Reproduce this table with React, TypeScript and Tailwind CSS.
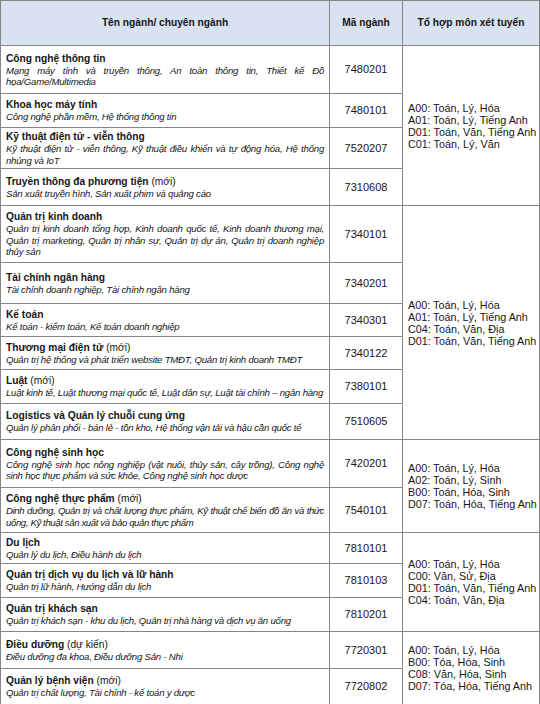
type Row = {
  title: string;
  note?: string;
  lines: string[];
  code: string;
  h: number;
  tight?: boolean;
};

type Group = { combos: string[]; rows: Row[] };

const groups: Group[] = [
  {
    combos: [
      "A00: Toán, Lý, Hóa",
      "A01: Toán, Lý, Tiếng Anh",
      "D01: Toán, Văn, Tiếng Anh",
      "C01: Toán, Lý, Văn",
    ],
    rows: [
      {
        title: "Công nghệ thông tin",
        lines: [
          "Mạng máy tính và truyền thông, An toàn thông tin, Thiết kế Đồ",
          "họa/Game/Multimedia",
        ],
        code: "7480201",
        h: 48,
      },
      {
        title: "Khoa học máy tính",
        lines: ["Công nghệ phần mềm, Hệ thống thông tin"],
        code: "7480101",
        h: 34,
      },
      {
        title: "Kỹ thuật điện tử - viễn thông",
        lines: [
          "Kỹ thuật điện tử - viễn thông, Kỹ thuật điều khiển và tự động hóa, Hệ thống",
          "nhúng và IoT",
        ],
        code: "7520207",
        h: 41,
      },
      {
        title: "Truyền thông đa phương tiện",
        note: "(mới)",
        lines: ["Sản xuất truyền hình, Sản xuất phim và quảng cáo"],
        code: "7310608",
        h: 37,
      },
    ],
  },
  {
    combos: [
      "A00: Toán, Lý, Hóa",
      "A01: Toán, Lý, Tiếng Anh",
      "C04: Toán, Văn, Địa",
      "D01: Toán, Văn, Tiếng Anh",
    ],
    rows: [
      {
        title: "Quản trị kinh doanh",
        lines: [
          "Quản trị kinh doanh tổng hợp, Kinh doanh quốc tế, Kinh doanh thương mại,",
          "Quản trị marketing, Quản trị nhân sự, Quản trị dự án, Quản trị doanh nghiệp",
          "thủy sản",
        ],
        code: "7340101",
        h: 57,
      },
      {
        title: "Tài chính ngân hàng",
        lines: ["Tài chính doanh nghiệp, Tài chính ngân hàng"],
        code: "7340201",
        h: 41,
      },
      {
        title: "Kế toán",
        lines: ["Kế toán - kiểm toán, Kế toán doanh nghiệp"],
        code: "7340301",
        h: 33,
      },
      {
        title: "Thương mại điện tử",
        note: "(mới)",
        lines: ["Quản trị hệ thống và phát triển website TMĐT, Quản trị kinh doanh TMĐT"],
        code: "7340122",
        h: 33,
      },
      {
        title: "Luật",
        note: "(mới)",
        lines: ["Luật kinh tế, Luật thương mại quốc tế, Luật dân sự, Luật tài chính – ngân hàng"],
        code: "7380101",
        h: 34,
      },
      {
        title: "Logistics và Quản lý chuỗi cung ứng",
        lines: ["Quản lý phân phối - bán lẻ - tồn kho, Hệ thống vận tải và hậu cần quốc tế"],
        code: "7510605",
        h: 36,
      },
    ],
  },
  {
    combos: [
      "A00: Toán, Lý, Hóa",
      "A02: Toán, Lý, Sinh",
      "B00: Toán, Hóa, Sinh",
      "D07: Toán, Hóa, Tiếng Anh",
    ],
    rows: [
      {
        title: "Công nghệ sinh học",
        lines: [
          "Công nghệ sinh học nông nghiệp (vật nuôi, thủy sản, cây trồng), Công nghệ",
          "sinh học thực phẩm và sức khỏe, Công nghệ sinh học dược",
        ],
        code: "7420201",
        h: 48,
      },
      {
        title: "Công nghệ thực phẩm",
        note: "(mới)",
        lines: [
          "Dinh dưỡng, Quản trị và chất lượng thực phẩm, Kỹ thuật chế biến đồ ăn và thức",
          "uống, Kỹ thuật sản xuất và bảo quản thực phẩm",
        ],
        code: "7540101",
        h: 45,
        tight: true,
      },
    ],
  },
  {
    combos: [
      "A00: Toán, Lý, Hóa",
      "C00: Văn, Sử, Địa",
      "D01: Toán, Văn, Tiếng Anh",
      "C04: Toán, Văn, Địa",
    ],
    rows: [
      {
        title: "Du lịch",
        lines: ["Quản lý du lịch, Điều hành du lịch"],
        code: "7810101",
        h: 31,
      },
      {
        title: "Quản trị dịch vụ du lịch và lữ hành",
        lines: ["Quản trị lữ hành, Hướng dẫn du lịch"],
        code: "7810103",
        h: 34,
      },
      {
        title: "Quản trị khách sạn",
        lines: ["Quản trị khách sạn - khu du lịch, Quản trị nhà hàng và dịch vụ ăn uống"],
        code: "7810201",
        h: 34,
      },
    ],
  },
  {
    combos: [
      "A00: Toán, Lý, Hóa",
      "B00: Tóa, Hóa, Sinh",
      "C08: Văn, Hóa, Sinh",
      "D07: Tóa, Hóa, Tiếng Anh",
    ],
    rows: [
      {
        title: "Điều dưỡng",
        note: "(dự kiến)",
        lines: ["Điều dưỡng đa khoa, Điều dưỡng Sản - Nhi"],
        code: "7720301",
        h: 37,
      },
      {
        title: "Quản lý bệnh viện",
        note: "(mới)",
        lines: ["Quản trị chất lượng, Tài chính - kế toán y dược"],
        code: "7720802",
        h: 36,
      },
    ],
  },
];

const cell = "border border-[#858585] align-middle";

function MajorCell({ row }: { row: Row }) {
  const track = row.tight ? "tracking-[-0.38px]" : "tracking-[-0.22px]";
  return (
    <td className={`${cell} px-[5px]`}>
      <div className="text-[10.2px] leading-[13px] font-bold">
        {row.title}
        {row.note && <span className="font-normal"> {row.note}</span>}
      </div>
      {row.lines.map((line, i) => (
        <div
          key={i}
          className={`whitespace-nowrap text-[9.6px] leading-[11.5px] italic ${track} ${
            i < row.lines.length - 1 ? "text-justify [text-align-last:justify]" : ""
          }`}
        >
          {line}
        </div>
      ))}
    </td>
  );
}

export default function App() {
  return (
    <div className="w-[540px] h-[704px] overflow-hidden bg-white font-['Liberation_Sans',Arial,sans-serif] text-[#161616]">
      <table className="w-[539px] border-collapse table-fixed">
        <colgroup>
          <col className="w-[329px]" />
          <col className="w-[73px]" />
          <col className="w-[137px]" />
        </colgroup>
        <thead>
          <tr className="h-[45px] bg-[#d9e2f1]">
            <th className={`${cell} text-[10.2px] font-bold`}>Tên ngành/ chuyên ngành</th>
            <th className={`${cell} text-[10.2px] font-bold`}>Mã ngành</th>
            <th className={`${cell} text-[10.2px] font-bold`}>Tổ hợp môn xét tuyển</th>
          </tr>
        </thead>
        <tbody>
          {groups.map((g, gi) =>
            g.rows.map((row, ri) => (
              <tr key={`${gi}-${ri}`} style={{ height: row.h }}>
                <MajorCell row={row} />
                <td className={`${cell} text-center text-[11px]`}>{row.code}</td>
                {ri === 0 && (
                  <td
                    rowSpan={g.rows.length}
                    className={`${cell} pl-[5px] pr-0 whitespace-nowrap text-[10.8px] leading-[12px]`}
                  >
                    {g.combos.map((c) => (
                      <div key={c}>{c}</div>
                    ))}
                  </td>
                )}
              </tr>
            ))
          )}
        </tbody>
      </table>
    </div>
  );
}
